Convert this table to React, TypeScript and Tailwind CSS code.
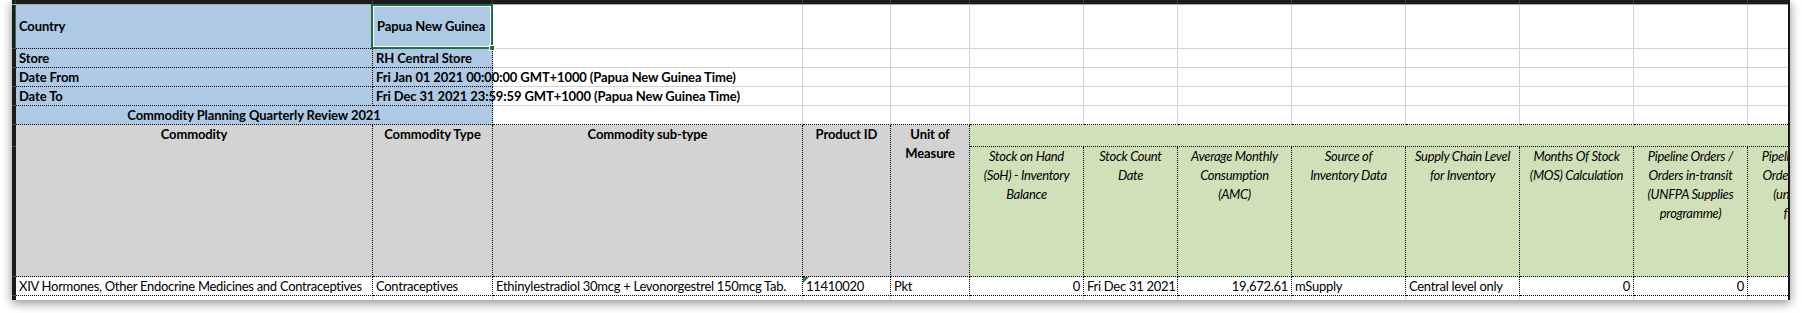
import React from "react";

const blue = "bg-[#adc9e3] border-r border-b border-dotted border-black";
const gridCell = "border-r border-b border-[#d4d4d4]";
const row5Cell = "border-r border-r-[#d4d4d4] border-b border-b-black [border-bottom-style:dotted]";
const gray = "bg-[#d3d3d3] border-r border-b border-dotted border-black";
const green = "bg-[#d0e0b9] border-r border-b border-dotted border-black";
const data = "border-r border-b border-dotted border-black whitespace-nowrap overflow-hidden flex items-center tracking-[-0.28px]";
const bold = "font-bold tracking-[-0.1px]";

const colWidths = [357, 120, 310, 88, 79, 114, 94, 114, 114, 114, 114, 114, 114];
const rowHeights = [44, 19, 19, 19, 19, 22, 130, 19, 19];

function GreenHead({ lines }: { lines: string[] }) {
  return (
    <div className={`${green} flex flex-col items-center italic leading-[19px] tracking-[-0.3px] overflow-hidden`}>
      {lines.map((l, i) => (
        <span key={i} className="whitespace-nowrap">
          {l}
        </span>
      ))}
    </div>
  );
}

function GrayHead({ lines }: { lines: string[] }) {
  return (
    <div className={`${gray} ${bold} row-span-2 flex flex-col items-center leading-[19px] overflow-hidden`}>
      {lines.map((l, i) => (
        <span key={i} className="whitespace-nowrap">
          {l}
        </span>
      ))}
    </div>
  );
}

export default function App() {
  const eleven = Array.from({ length: 11 });
  return (
    <div className="w-[1802px] h-[313px] bg-white overflow-hidden [font-family:Lato,sans-serif] text-[13px] text-black">
      <div className="ml-[12px] w-[1778px] h-[300px] flex flex-col overflow-hidden bg-white border-r-2 border-[#161616] shadow-[0_3px_10px_rgba(0,0,0,0.45)]">
        {/* column header strip */}
        <div className="h-[5px] shrink-0 flex bg-[#1c1c1c] border-b border-[#a8a8a8]">
          <div className="w-[4px] shrink-0 border-r border-[#3a3a3a]" />
          {colWidths.map((w, i) => (
            <div key={i} className="shrink-0 border-r border-[#3a3a3a]" style={{ width: w }} />
          ))}
        </div>
        <div className="flex flex-1 min-h-0">
          {/* row header strip */}
          <div className="w-[4px] shrink-0 flex flex-col bg-[#1c1c1c]">
            {rowHeights.map((h, i) => (
              <div
                key={i}
                className={i === 0 ? "shrink-0 border-b border-[#4a4a4a] border-r border-r-[#1f7a45]" : "shrink-0 border-b border-[#4a4a4a]"}
                style={{ height: h }}
              />
            ))}
          </div>
          <div className="grid shrink-0 grid-cols-[357px_120px_310px_88px_79px_114px_94px_114px_114px_114px_114px_114px_114px] grid-rows-[44px_19px_19px_19px_19px_22px_130px_19px_19px]">
            {/* Row 1 */}
            <div className={`${blue} ${bold} flex items-center pl-[3px]`}>Country</div>
            <div className={`${blue} ${bold} relative flex items-center pl-[4px] whitespace-nowrap`}>
              Papua New Guinea
              <div className="absolute -left-[2px] -top-[1px] -right-[1px] -bottom-[1px] border-2 border-[#1e6e42] shadow-[inset_0_0_0_1px_white] pointer-events-none" />
              <div className="absolute -right-[3px] -bottom-[3px] w-[6px] h-[6px] bg-[#1e6e42] border border-white" />
            </div>
            {eleven.map((_, i) => (
              <div key={`r1-${i}`} className={gridCell} />
            ))}
            {/* Row 2 */}
            <div className={`${blue} ${bold} flex items-center pl-[3px] leading-[18px]`}>Store</div>
            <div className={`${blue} ${bold} flex items-center pl-[3px] leading-[18px] whitespace-nowrap`}>RH Central Store</div>
            {eleven.map((_, i) => (
              <div key={`r2-${i}`} className={gridCell} />
            ))}
            {/* Row 3 */}
            <div className={`${blue} ${bold} flex items-center pl-[3px] leading-[18px]`}>Date From</div>
            <div className={`${blue} ${bold} relative z-10 flex items-center pl-[3px] leading-[18px] whitespace-nowrap`}>
              Fri Jan 01 2021 00:00:00 GMT+1000 (Papua New Guinea Time)
            </div>
            {eleven.map((_, i) => (
              <div key={`r3-${i}`} className={gridCell} />
            ))}
            {/* Row 4 */}
            <div className={`${blue} ${bold} flex items-center pl-[3px] leading-[18px]`}>Date To</div>
            <div className={`${blue} ${bold} relative z-10 flex items-center pl-[3px] leading-[18px] whitespace-nowrap`}>
              Fri Dec 31 2021 23:59:59 GMT+1000 (Papua New Guinea Time)
            </div>
            {eleven.map((_, i) => (
              <div key={`r4-${i}`} className={gridCell} />
            ))}
            {/* Row 5 */}
            <div className={`${blue} ${bold} col-span-2 flex items-center justify-center leading-[18px] whitespace-nowrap`}>
              Commodity Planning Quarterly Review 2021
            </div>
            {eleven.map((_, i) => (
              <div key={`r5-${i}`} className={row5Cell} />
            ))}
            {/* Rows 6-7 headers */}
            <GrayHead lines={["Commodity"]} />
            <GrayHead lines={["Commodity Type"]} />
            <GrayHead lines={["Commodity sub-type"]} />
            <GrayHead lines={["Product ID"]} />
            <GrayHead lines={["Unit of", "Measure"]} />
            <div className="col-span-8 bg-[#d0e0b9] border-b border-dotted border-black" />
            <GreenHead lines={["Stock on Hand", "(SoH) - Inventory", "Balance"]} />
            <GreenHead lines={["Stock Count", "Date"]} />
            <GreenHead lines={["Average Monthly", "Consumption", "(AMC)"]} />
            <GreenHead lines={["Source of", "Inventory Data"]} />
            <GreenHead lines={["Supply Chain Level", "for Inventory"]} />
            <GreenHead lines={["Months Of Stock", "(MOS) Calculation"]} />
            <GreenHead lines={["Pipeline Orders /", "Orders in-transit", "(UNFPA Supplies", "programme)"]} />
            <GreenHead lines={["Pipeline Orders /", "Orders in-transit", "(under other", "funding)"]} />
            {/* Row 8 data */}
            <div className={`${data} pl-[3px] leading-[18px]`}>XIV Hormones, Other Endocrine Medicines and Contraceptives</div>
            <div className={`${data} pl-[3px] leading-[18px]`}>Contraceptives</div>
            <div className={`${data} pl-[3px] leading-[18px]`}>Ethinylestradiol 30mcg + Levonorgestrel 150mcg Tab.</div>
            <div className={`${data} relative pl-[3px] leading-[18px]`}>
              <svg className="absolute left-0 top-0" width="6" height="6" viewBox="0 0 6 6">
                <polygon points="0,0 6,0 0,6" fill="#1e7a3d" />
              </svg>
              11410020
            </div>
            <div className={`${data} pl-[3px] leading-[18px]`}>Pkt</div>
            <div className={`${data} justify-end pr-[3px] leading-[18px]`}>0</div>
            <div className={`${data} pl-[3px] leading-[18px]`}>Fri Dec 31 2021</div>
            <div className={`${data} justify-end pr-[3px] leading-[18px]`}>19,672.61</div>
            <div className={`${data} pl-[3px] leading-[18px]`}>mSupply</div>
            <div className={`${data} pl-[3px] leading-[18px]`}>Central level only</div>
            <div className={`${data} justify-end pr-[3px] leading-[18px]`}>0</div>
            <div className={`${data} justify-end pr-[3px] leading-[18px]`}>0</div>
            <div className={data} />
            {/* Row 9 */}
            {Array.from({ length: 13 }).map((_, i) => (
              <div key={`r9-${i}`} className="border-r border-[#d4d4d4]" />
            ))}
          </div>
        </div>
      </div>
    </div>
  );
}
